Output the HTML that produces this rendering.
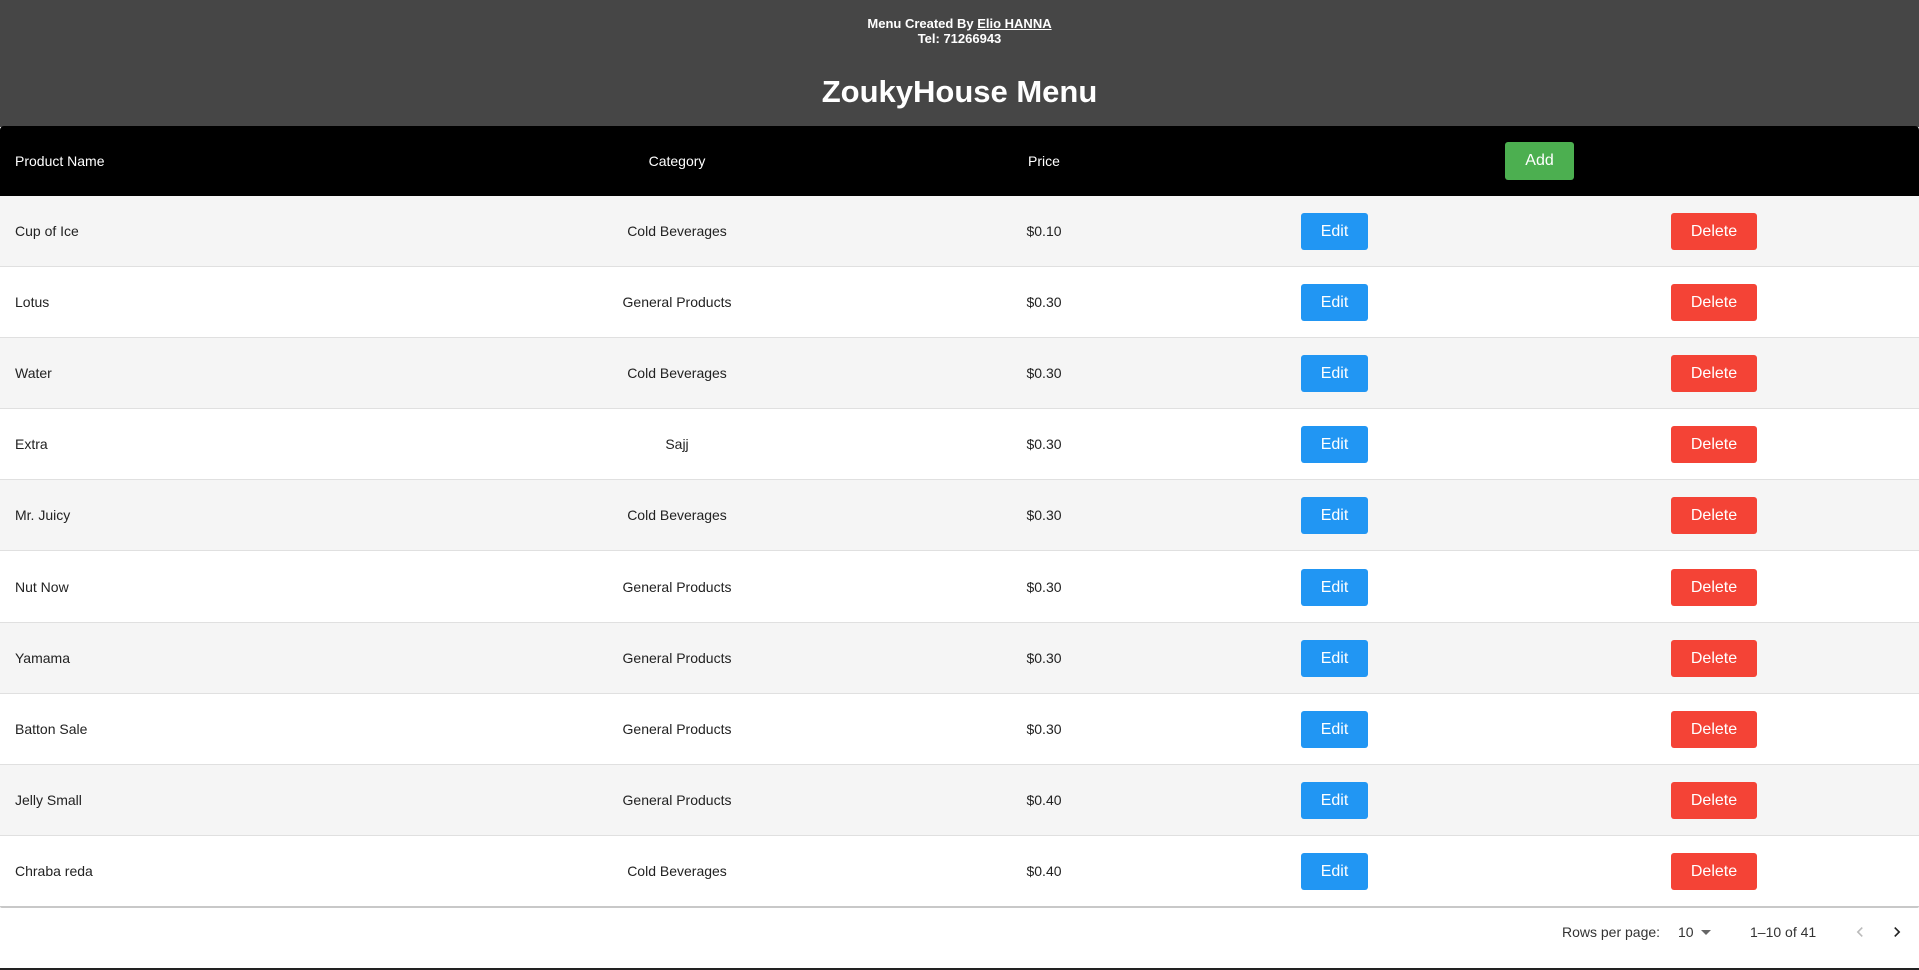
<!DOCTYPE html>
<html><head><meta charset="utf-8"><style>
*{box-sizing:border-box;margin:0;padding:0}
body{width:1919px;height:970px;overflow:hidden;background:#fff;font-family:"Liberation Sans",Arial,sans-serif;position:relative}
.hdr{position:absolute;left:0;top:0;width:1919px;height:127px;background:#464646;color:#fff;text-align:center}
.cr{position:absolute;top:16px;width:100%;font-size:13px;font-weight:bold;line-height:15px}
.cr u{text-decoration:underline}
.ttl{position:absolute;top:72px;width:100%;font-size:31px;font-weight:bold;line-height:40px}
.th{position:absolute;left:0;top:126px;width:1919px;height:70px;background:#000;color:#fff;font-size:14px;border-radius:4px 4px 0 0}
.row{position:absolute;left:0;width:1919px;height:71px;border-bottom:1px solid #e0e0e0;font-size:14px;color:#222}
.c{position:absolute;top:0;line-height:70px;white-space:nowrap}
.cen{transform:translateX(-50%)}
.btn{position:absolute;color:#fff;font-size:16px;text-align:center;border-radius:3px;line-height:37px;height:37px}
.e{left:1301px;width:67px;top:17px;background:#2196f3}
.d{left:1671px;width:86px;top:17px;background:#f44336}
.ft{position:absolute;top:922px;font-size:14px;color:#333;line-height:20px}
</style></head><body>
<div class="hdr"><div class="cr">Menu Created By <u>Elio HANNA</u><br>Tel: 71266943</div><div class="ttl">ZoukyHouse Menu</div></div>
<div class="th">
<div class="c" style="left:15px">Product Name</div>
<div class="c cen" style="left:677px">Category</div>
<div class="c cen" style="left:1044px">Price</div>
<div class="btn" style="left:1505px;top:16px;width:69px;height:38px;line-height:38px;background:#4caf50">Add</div>
</div>
<div id="rows"></div>
<div style="position:absolute;left:0;top:906px;width:1919px;height:2px;background:#c8c8c8;border-radius:0 0 4px 4px"></div>
<div class="ft" style="left:1562px">Rows per page:</div>
<div class="ft" style="left:1678px">10</div>
<div style="position:absolute;left:1701px;top:930px;width:0;height:0;border-left:5px solid transparent;border-right:5px solid transparent;border-top:5px solid #666"></div>
<div class="ft" style="left:1750px">1–10 of 41</div>
<svg style="position:absolute;left:1850px;top:922px" width="20" height="20" viewBox="0 0 24 24"><path d="M15.4 7.4L14 6l-6 6 6 6 1.4-1.4L10.8 12z" fill="#bbb"/></svg>
<svg style="position:absolute;left:1887px;top:922px" width="20" height="20" viewBox="0 0 24 24"><path d="M10 6L8.6 7.4 13.2 12l-4.6 4.6L10 18l6-6z" fill="#222"/></svg>
<div style="position:absolute;left:0;top:968px;width:1919px;height:2px;background:#222"></div>
<script>
var d=[["Cup of Ice","Cold Beverages","$0.10"],["Lotus","General Products","$0.30"],["Water","Cold Beverages","$0.30"],["Extra","Sajj","$0.30"],["Mr. Juicy","Cold Beverages","$0.30"],["Nut Now","General Products","$0.30"],["Yamama","General Products","$0.30"],["Batton Sale","General Products","$0.30"],["Jelly Small","General Products","$0.40"],["Chraba reda","Cold Beverages","$0.40"]];
var h="";d.forEach(function(r,i){h+='<div class="row" style="top:'+(196+i*71.1)+'px;background:'+(i%2?'#fff':'#f5f5f5')+'"><div class="c" style="left:15px">'+r[0]+'</div><div class="c cen" style="left:677px">'+r[1]+'</div><div class="c cen" style="left:1044px">'+r[2]+'</div><div class="btn e">Edit</div><div class="btn d">Delete</div></div>';});
document.getElementById("rows").innerHTML=h;
</script>
</body></html>
